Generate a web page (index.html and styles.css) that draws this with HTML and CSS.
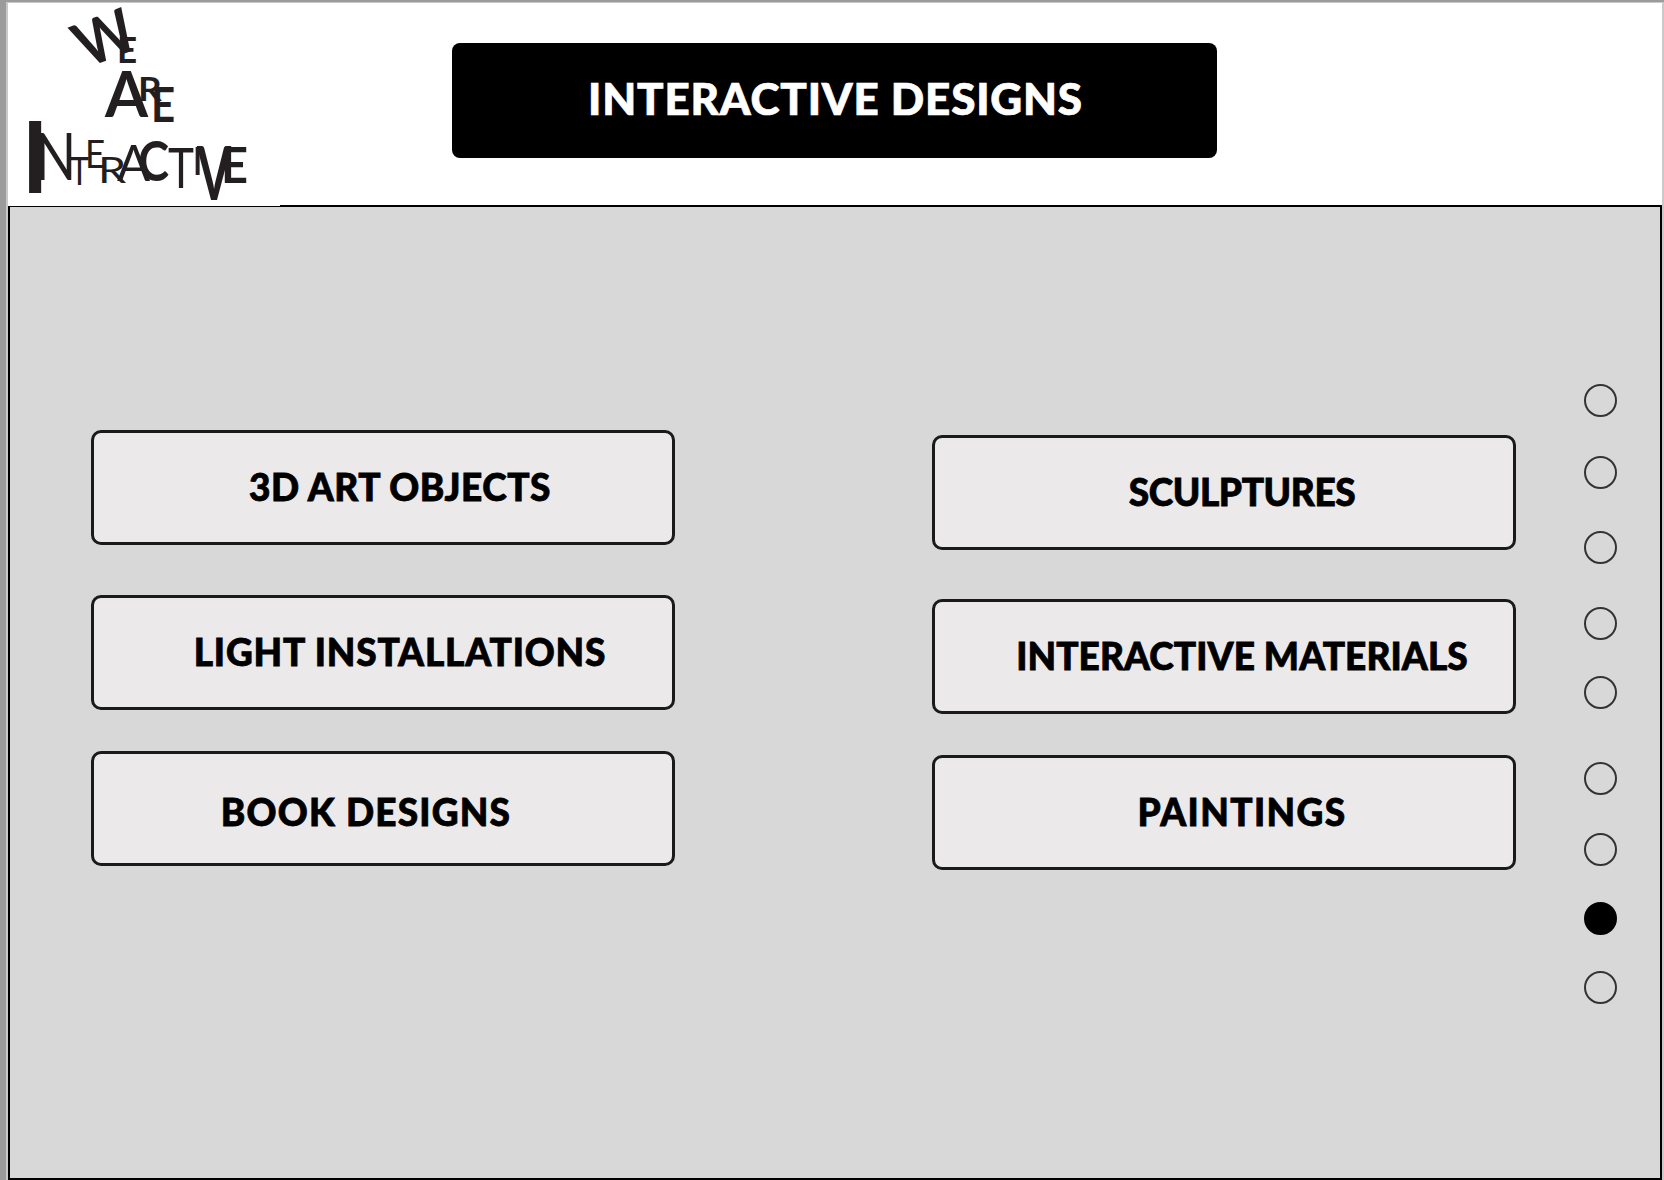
FILE: index.html
```html
<!DOCTYPE html>
<html lang="en">
<head>
  <meta charset="UTF-8" />
  <meta name="viewport" content="width=device-width, initial-scale=1.0"/>
  <title>Interactive Designs</title>
  <link rel="stylesheet" href="styles.css">
</head>
<body>

<div class="frame">
  <header class="top">
    <a class="logo" href="#" aria-label="We Are Interactive">
      <svg viewBox="8 3 272 203" width="272" height="203">
        <!-- WE -->
        <text transform="matrix(.52 -.2 .287 .551 87.7 67.7)">W</text>
        <text transform="translate(117 63) scale(.35 .36)">E</text>
        <!-- ARE -->
        <text transform="translate(105 117) scale(.62 .63)">A</text>
        <text transform="translate(138 101) scale(.37 .33)">R</text>
        <text transform="translate(151 122) scale(.42 .47)">E</text>
        <!-- INTERACTIVE -->
        <text class="heavy" transform="translate(23 193) scale(.8 .99)">I</text>
        <text class="light" transform="translate(35 180) scale(.54 .65)">N</text>
        <text class="light" transform="translate(70 185) scale(.32 .39)">T</text>
        <text class="light" transform="translate(85 168) scale(.35 .38)">E</text>
        <text class="light" transform="translate(98 183) scale(.45 .36)">R</text>
        <text class="light" transform="translate(117 181) scale(.49 .5)">A</text>
        <text transform="translate(138 181) scale(.47 .55)">C</text>
        <text class="light" transform="translate(168 188) scale(.44 .57)">T</text>
        <text class="light" transform="translate(192 175) scale(.4 .39)">I</text>
        <text transform="translate(197 200) scale(.49 .74)">V</text>
        <text transform="translate(221 183) scale(.47 .5)">E</text>
      </svg>
    </a>
    <div class="title-bar">
      <h1>INTERACTIVE DESIGNS</h1>
    </div>
  </header>

  <main class="panel">
    <section class="col col-left">
      <a class="btn shift-right" href="#">3D ART OBJECTS</a>
      <a class="btn shift-right" href="#">LIGHT INSTALLATIONS</a>
      <a class="btn shift-left" href="#">BOOK DESIGNS</a>
    </section>
    <section class="col col-right">
      <a class="btn shift-right" href="#">SCULPTURES</a>
      <a class="btn shift-right" href="#">INTERACTIVE MATERIALS</a>
      <a class="btn shift-right" href="#">PAINTINGS</a>
    </section>
    <nav class="dots">
      <span class="dot"></span>
      <span class="dot"></span>
      <span class="dot"></span>
      <span class="dot"></span>
      <span class="dot"></span>
      <span class="dot"></span>
      <span class="dot"></span>
      <span class="dot active"></span>
      <span class="dot"></span>
    </nav>
  </main>
</div>

</body>
</html>
```

FILE: styles.css
```css
* { box-sizing: border-box; }

html, body { height: 100%; }

body {
  margin: 0;
  height: 1180px;
  overflow: hidden;
  background: #c9c9c9;
  border-left: 6px solid #9b9b9b;
  border-top: 2px solid #9b9b9b;
  padding: 1px 2px 0 2px;
  font-family: Lato, "Open Sans", sans-serif;
}

.frame {
  height: 100%;
  background: #fff;
  display: flex;
  flex-direction: column;
}

.top {
  height: 202px;
  display: flex;
  align-items: flex-start;
  flex: none;
}

.logo {
  display: block;
  width: 272px;
  height: 203px;
  background: #fff;
  position: relative;
  z-index: 1;
  flex: none;
}

.logo svg { display: block; }

.logo text {
  font-family: Lato, sans-serif;
  font-size: 100px;
  font-weight: 700;
  fill: #231f20;
}

.logo text.heavy { font-weight: 900; }
.logo text.light { font-weight: 400; }

.title-bar {
  width: 765px;
  height: 115px;
  margin: 40px 0 0 172px;
  padding: 0 0 5px 2px;
  background: #000;
  border-radius: 8px;
  display: flex;
  align-items: center;
  justify-content: center;
}

.title-bar h1 {
  margin: 0;
  color: #fff;
  font-size: 44px;
  font-weight: 900;
  letter-spacing: 0.8px;
  -webkit-text-stroke: 0.7px #fff;
  white-space: nowrap;
}

.panel {
  flex: 1;
  display: flex;
  align-items: flex-start;
  background: #d8d8d8;
  border: 2px solid #000;
  padding-left: 81px;
}

.col {
  width: 584px;
  display: flex;
  flex-direction: column;
  flex: none;
}

.col-left { padding-top: 223px; }

.col-right {
  padding-top: 228px;
  margin-left: 257px;
}

.btn {
  height: 115px;
  padding-bottom: 2px;
  background: #ebe9ea;
  border: 3px solid #1a1a1a;
  border-radius: 10px;
  display: flex;
  align-items: center;
  justify-content: center;
  color: #000;
  font-size: 37px;
  font-weight: 900;
  -webkit-text-stroke: 0.8px #000;
  text-decoration: none;
  white-space: nowrap;
}

.btn:nth-child(2) { margin-top: 50px; }
.btn:nth-child(3) { margin-top: 41px; }

.col-right .btn:nth-child(2) { margin-top: 49px; }
.col-right .btn:nth-child(3) { margin-top: 41px; }

.shift-right { padding-left: 34px; }
.shift-left { padding-right: 34px; }

.col-right .shift-right { padding-left: 36px; }

/* spacing per label, the lettering widths differ */
.col-left .btn:nth-child(1) { letter-spacing: 0.5px; }
.col-left .btn:nth-child(2) { letter-spacing: 0.85px; }
.col-left .btn:nth-child(3) { letter-spacing: 1.2px; padding-top: 6px; padding-bottom: 0; }
.col-right .btn:nth-child(1) { letter-spacing: -0.4px; }
.col-right .btn:nth-child(2) { letter-spacing: 0.1px; }
.col-right .btn:nth-child(3) { letter-spacing: 1.4px; padding-bottom: 3px; }

.dots {
  display: flex;
  flex-direction: column;
  margin-left: 68px;
  padding-top: 177px;
}

.dot {
  display: block;
  width: 33px;
  height: 33px;
  border: 2px solid #333;
  border-radius: 50%;
}

.dot:nth-child(2) { margin-top: 39px; }
.dot:nth-child(3) { margin-top: 42px; }
.dot:nth-child(4) { margin-top: 43px; }
.dot:nth-child(5) { margin-top: 36px; }
.dot:nth-child(6) { margin-top: 53px; }
.dot:nth-child(7) { margin-top: 38px; }
.dot:nth-child(8) { margin-top: 36px; }
.dot:nth-child(9) { margin-top: 36px; }

.dot.active { background: #000; border-color: #000; }
```
